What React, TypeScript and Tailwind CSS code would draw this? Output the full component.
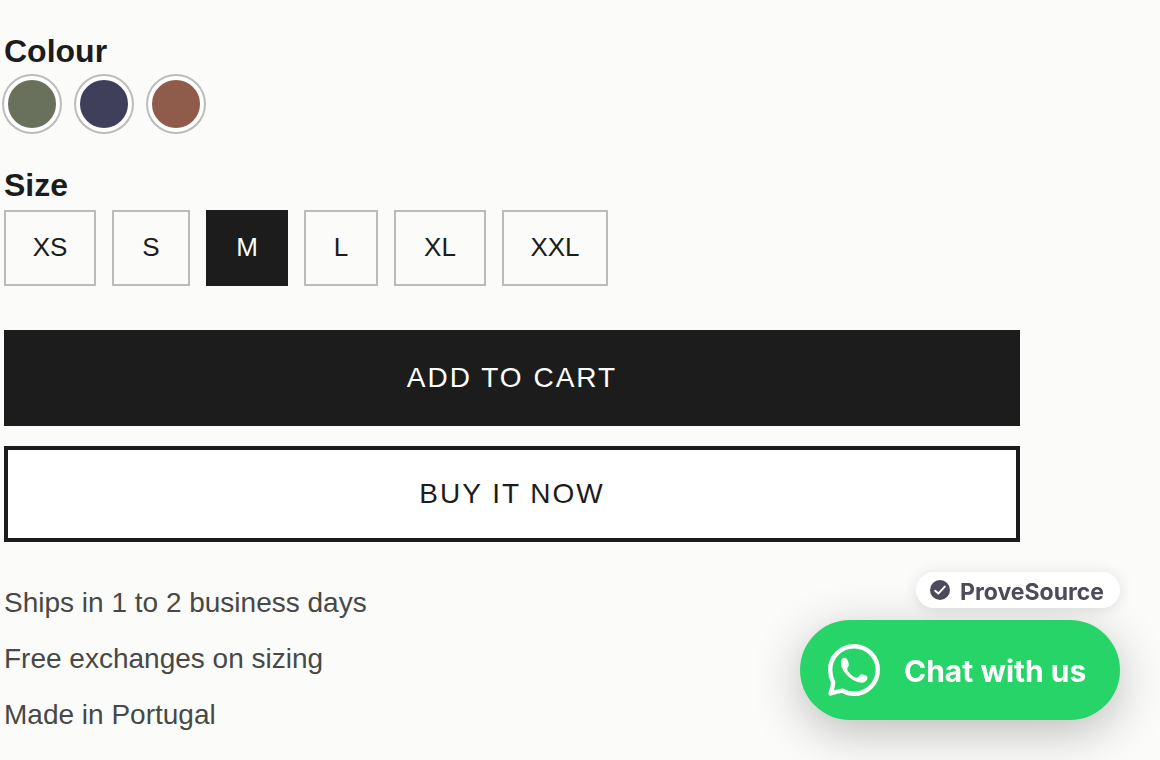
import { clsx } from 'clsx';

const COLOURS = [
  { name: 'Olive', swatch: 'bg-[#69705c]' },
  { name: 'Navy', swatch: 'bg-[#3f3f5c]' },
  { name: 'Rust', swatch: 'bg-[#8f5b4b]' },
];

const SIZES = [
  { label: 'XS', width: 'w-[92px]' },
  { label: 'S', width: 'w-[78px]' },
  { label: 'M', width: 'w-[82px]' },
  { label: 'L', width: 'w-[74px]' },
  { label: 'XL', width: 'w-[92px]' },
  { label: 'XXL', width: 'w-[106px]' },
];

const NOTES = [
  'Ships in 1 to 2 business days',
  'Free exchanges on sizing',
  'Made in Portugal',
];

function ColourPicker() {
  return (
    <fieldset>
      <legend className="mb-1 text-[32px] leading-[42px] font-bold">Colour</legend>
      <div className="flex gap-4">
        {COLOURS.map((colour) => (
          <input
            key={colour.name}
            type="radio"
            name="colour"
            aria-label={colour.name}
            className={clsx(
              'size-14 cursor-pointer appearance-none rounded-full border-4 border-white ring-2 ring-[#bbbbb9]',
              colour.swatch
            )}
          />
        ))}
      </div>
    </fieldset>
  );
}

function SizePicker() {
  return (
    <fieldset className="mt-8">
      <legend className="mb-1 text-[32px] leading-[42px] font-bold">Size</legend>
      <div className="flex flex-wrap gap-4">
        {SIZES.map((size) => (
          <label
            key={size.label}
            className={clsx(
              'flex h-[76px] cursor-pointer items-center justify-center border-2 border-[#bbbbb9] pb-0.5 text-[26px] leading-8 has-checked:border-[#1c1c1c] has-checked:bg-[#1c1c1c] has-checked:text-white',
              size.width
            )}
          >
            <input
              type="radio"
              name="size"
              value={size.label}
              defaultChecked={size.label === 'M'}
              className="sr-only"
            />
            {size.label}
          </label>
        ))}
      </div>
    </fieldset>
  );
}

function WhatsAppIcon() {
  return (
    <svg viewBox="0 0 52 52" className="size-[52px]" aria-hidden="true">
      <path
        d="M2.6 49.4C4 45.800 5 42 5.200 38.200C3.300 34.600 2.200 30.500 2.200 26A23.800 23.800 0 1 1 26 49.800C21.800 49.800 18 48.800 14.600 46.600C10.600 47.200 6.600 48.200 2.600 49.400Z"
        fill="none"
        stroke="#fff"
        strokeWidth="4.4"
        strokeLinejoin="round"
      />
      <path
        d="M14.8 14.2C16.400 13.400 18.400 13.900 19.200 15.500C20.300 17.600 20.900 19.600 20.700 21.400C20.500 22.700 19.200 23.600 19.200 24.900C19.600 28.300 25.300 33 28.900 33.800C30.200 34 31.200 31.400 32.700 30.600C34.800 30 39 31.600 39.500 33.200C39.900 35.400 37.300 38.300 34.400 38.600C26.600 39.200 14.600 30 13.200 20.800C12.800 18.200 13 15.400 14.800 14.200Z"
        fill="#fff"
      />
    </svg>
  );
}

function ChatWidget() {
  return (
    <aside className="fixed right-10 bottom-10 flex flex-col items-end gap-3 font-['Inter',sans-serif] font-bold">
      <a
        href="#provesource"
        className="relative z-10 flex h-9 items-center gap-2.5 rounded-full bg-white pr-4 pl-3.5 text-[23px] text-[#4d4a5c] shadow-[0_2px_16px_rgba(0,0,0,0.12)] [font-variation-settings:'opsz'_14]"
      >
        <svg viewBox="0 0 20 20" className="size-5" aria-hidden="true">
          <circle cx="10" cy="10" r="10" fill="currentColor" />
          <path
            d="M5.2 10.8 8.3 13.6 14.8 6.6"
            fill="none"
            stroke="#fff"
            strokeWidth="2"
            strokeLinecap="round"
            strokeLinejoin="round"
          />
        </svg>
        <span className="pt-1 leading-8">ProveSource</span>
      </a>
      <a
        href="#chat"
        className="flex h-[100px] min-w-80 items-center gap-6 rounded-full bg-[#27d467] pr-8 pl-7 text-[30px] text-white shadow-[0_12px_48px_rgba(0,0,0,0.25)] [font-variation-settings:'opsz'_14]"
      >
        <WhatsAppIcon />
        <span className="pt-0.5 leading-10">Chat with us</span>
      </a>
    </aside>
  );
}

export default function App() {
  return (
    <div className="min-h-screen bg-[#fbfbf9] font-['Liberation_Sans',Arial,sans-serif] text-[#1c1c1c]">
      <main className="pt-[30px] pr-[140px] pl-1">
        <form onSubmit={(e) => e.preventDefault()}>
          <ColourPicker />
          <SizePicker />
          <div className="mt-11 flex flex-col gap-5 text-[28px] leading-10 tracking-[2px]">
            <button type="submit" className="h-24 cursor-pointer bg-[#1c1c1c] text-white">
              ADD TO CART
            </button>
            <button type="button" className="h-24 cursor-pointer border-4 border-[#1c1c1c] bg-white">
              BUY IT NOW
            </button>
          </div>
        </form>
        <ul className="mt-10 flex flex-col gap-3.5 text-[28px] leading-[42px] text-[#484847]">
          {NOTES.map((note) => (
            <li key={note}>{note}</li>
          ))}
        </ul>
      </main>
      <ChatWidget />
    </div>
  );
}
